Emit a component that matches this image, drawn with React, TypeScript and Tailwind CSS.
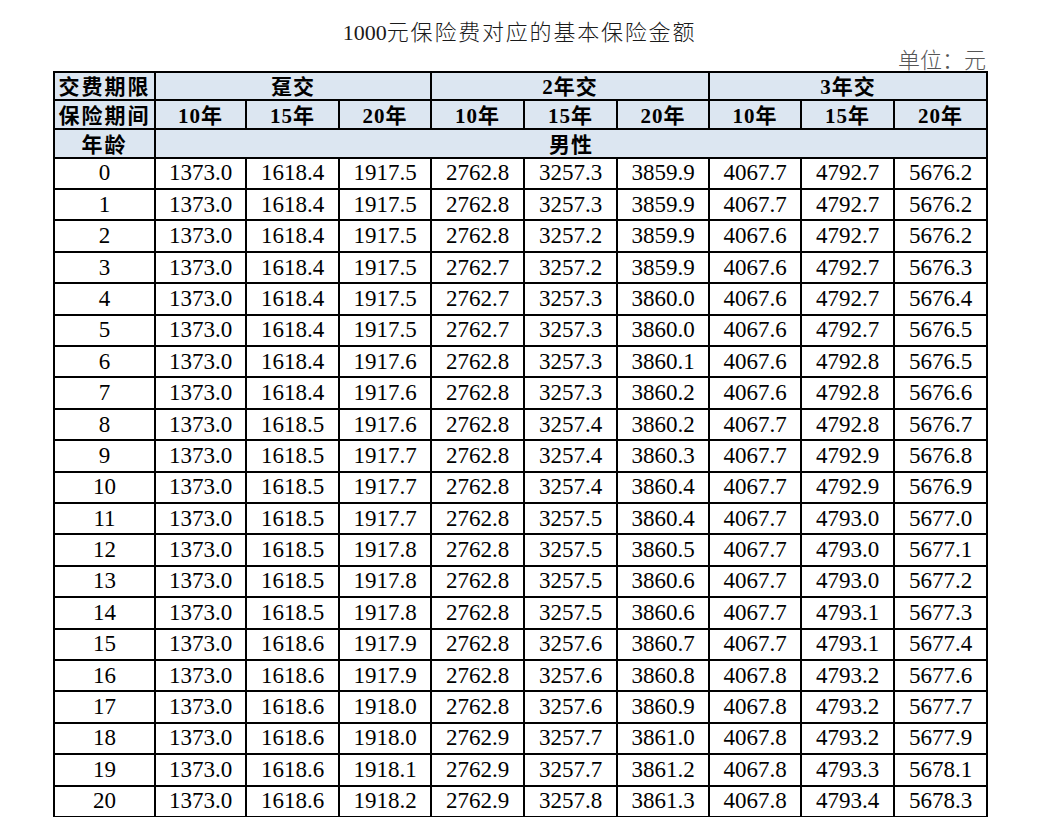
import React from "react";

const rows: string[][] = [
  ["1373.0", "1618.4", "1917.5", "2762.8", "3257.3", "3859.9", "4067.7", "4792.7", "5676.2"],
  ["1373.0", "1618.4", "1917.5", "2762.8", "3257.3", "3859.9", "4067.7", "4792.7", "5676.2"],
  ["1373.0", "1618.4", "1917.5", "2762.8", "3257.2", "3859.9", "4067.6", "4792.7", "5676.2"],
  ["1373.0", "1618.4", "1917.5", "2762.7", "3257.2", "3859.9", "4067.6", "4792.7", "5676.3"],
  ["1373.0", "1618.4", "1917.5", "2762.7", "3257.3", "3860.0", "4067.6", "4792.7", "5676.4"],
  ["1373.0", "1618.4", "1917.5", "2762.7", "3257.3", "3860.0", "4067.6", "4792.7", "5676.5"],
  ["1373.0", "1618.4", "1917.6", "2762.8", "3257.3", "3860.1", "4067.6", "4792.8", "5676.5"],
  ["1373.0", "1618.4", "1917.6", "2762.8", "3257.3", "3860.2", "4067.6", "4792.8", "5676.6"],
  ["1373.0", "1618.5", "1917.6", "2762.8", "3257.4", "3860.2", "4067.7", "4792.8", "5676.7"],
  ["1373.0", "1618.5", "1917.7", "2762.8", "3257.4", "3860.3", "4067.7", "4792.9", "5676.8"],
  ["1373.0", "1618.5", "1917.7", "2762.8", "3257.4", "3860.4", "4067.7", "4792.9", "5676.9"],
  ["1373.0", "1618.5", "1917.7", "2762.8", "3257.5", "3860.4", "4067.7", "4793.0", "5677.0"],
  ["1373.0", "1618.5", "1917.8", "2762.8", "3257.5", "3860.5", "4067.7", "4793.0", "5677.1"],
  ["1373.0", "1618.5", "1917.8", "2762.8", "3257.5", "3860.6", "4067.7", "4793.0", "5677.2"],
  ["1373.0", "1618.5", "1917.8", "2762.8", "3257.5", "3860.6", "4067.7", "4793.1", "5677.3"],
  ["1373.0", "1618.6", "1917.9", "2762.8", "3257.6", "3860.7", "4067.7", "4793.1", "5677.4"],
  ["1373.0", "1618.6", "1917.9", "2762.8", "3257.6", "3860.8", "4067.8", "4793.2", "5677.6"],
  ["1373.0", "1618.6", "1918.0", "2762.8", "3257.6", "3860.9", "4067.8", "4793.2", "5677.7"],
  ["1373.0", "1618.6", "1918.0", "2762.9", "3257.7", "3861.0", "4067.8", "4793.2", "5677.9"],
  ["1373.0", "1618.6", "1918.1", "2762.9", "3257.7", "3861.2", "4067.8", "4793.3", "5678.1"],
  ["1373.0", "1618.6", "1918.2", "2762.9", "3257.8", "3861.3", "4067.8", "4793.4", "5678.3"],
];

const colWidths = [101, 91, 93, 92, 93, 93, 92, 92, 93, 93];
const years = ["10年", "15年", "20年", "10年", "15年", "20年", "10年", "15年", "20年"];

const font = { fontFamily: '"Liberation Serif", "Noto Sans CJK SC", serif' };

export default function App() {
  const th =
    "border-2 border-black bg-[#dce6f1] p-0 text-center align-bottom text-[21px] leading-[23px] font-bold text-black tracking-[1px]";
  const td = "border-2 border-black p-0 text-center align-middle text-[23px] leading-[26px] text-black";
  return (
    <div className="w-[1044px] h-[817px] overflow-hidden bg-white" style={font}>
      <div className="pl-[53px] w-[986px]">
        <div className="pt-[20px] h-[46px] text-center text-[22px] leading-[26px] text-[#1a1a1a] font-light">
          1000<span className="tracking-[1.8px]">元保险费对应的基本保险金额</span>
        </div>
        <div className="mt-[5px] h-[20px] text-right text-[22px] leading-[20px] text-[#555555] font-light">
          单位：元
        </div>
        <table className="w-[933px] table-fixed border-collapse">
          <colgroup>
            {colWidths.map((w, i) => (
              <col key={i} style={{ width: w }} />
            ))}
          </colgroup>
          <thead>
            <tr className="h-[28px]">
              <th className={th + " tracking-[2px]"}>交费期限</th>
              <th className={th} colSpan={3}>趸交</th>
              <th className={th} colSpan={3}>2年交</th>
              <th className={th} colSpan={3}>3年交</th>
            </tr>
            <tr className="h-[29px]">
              <th className={th + " tracking-[2px]"}>保险期间</th>
              {years.map((y, i) => (
                <th key={i} className={th}>{y}</th>
              ))}
            </tr>
            <tr className="h-[28.7px]">
              <th className={th + " tracking-[2px]"}>年龄</th>
              <th className={th} colSpan={9}>男性</th>
            </tr>
          </thead>
          <tbody>
            {rows.map((r, i) => (
              <tr key={i} className="h-[31.4px]">
                <td className={td}>{i}</td>
                {r.map((v, j) => (
                  <td key={j} className={td}>{v}</td>
                ))}
              </tr>
            ))}
          </tbody>
        </table>
      </div>
    </div>
  );
}
